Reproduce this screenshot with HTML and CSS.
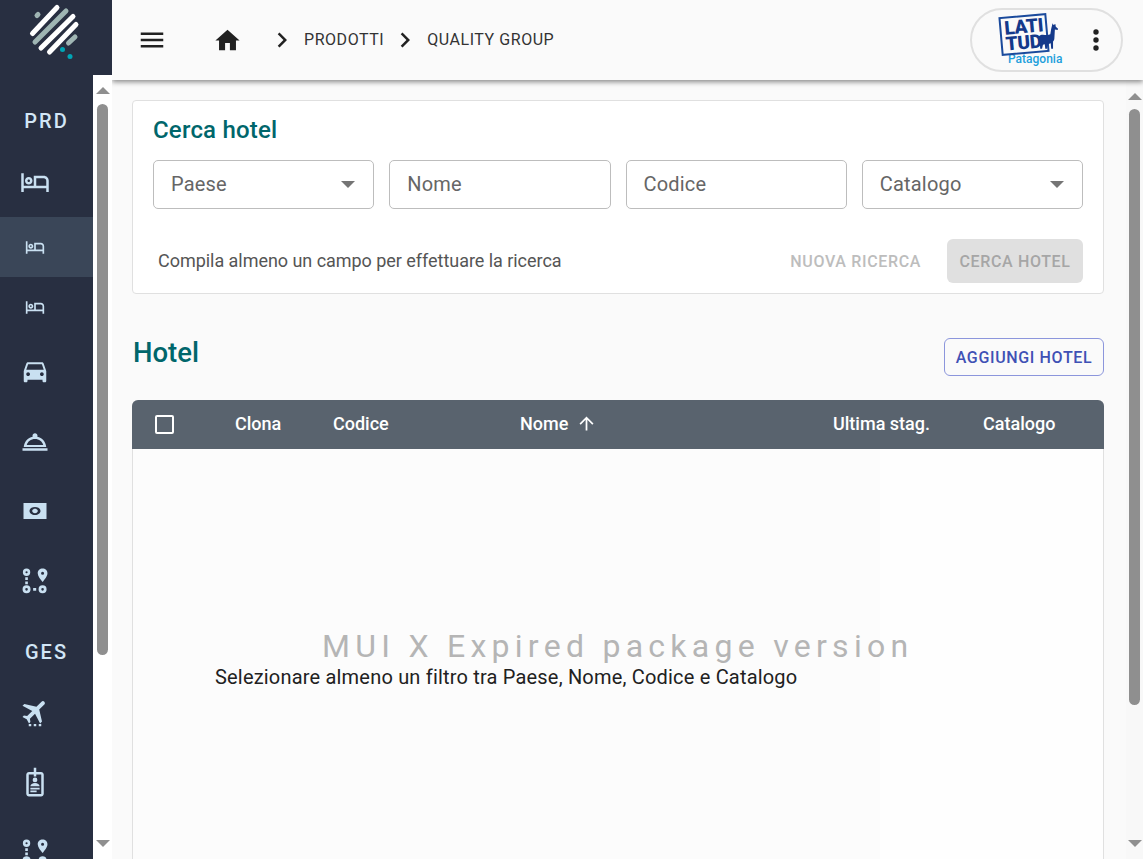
FILE: index.html
```html
<!DOCTYPE html>
<html lang="it">
<head>
    <meta charset="UTF-8">
    <meta name="viewport" content="width=device-width, initial-scale=1.0">
    <title>Quality Group - Prodotti</title>
    <link rel="stylesheet" href="styles.css">
</head>
<body>
    <svg class="defs" aria-hidden="true">
        <symbol id="i-bed" viewBox="0 0 24 24">
            <path d="M7 14c1.66 0 3-1.34 3-3S8.66 8 7 8s-3 1.34-3 3 1.34 3 3 3zm0-4c.55 0 1 .45 1 1s-.45 1-1 1-1-.45-1-1 .45-1 1-1zm12-3h-8v8H3V5H1v15h2v-3h18v3h2v-9c0-2.21-1.79-4-4-4zm2 8h-8V9h6c1.1 0 2 .9 2 2v4z"/>
        </symbol>
        <symbol id="i-route" viewBox="0 0 24 24">
            <path fill-rule="evenodd" d="M4.200 0.500a3.400 3.400 0 1 1 0 6.800 3.400 3.400 0 0 1 0-6.800zm0 2.400a1 1 0 1 0 0 2 1 1 0 0 0 0-2zM19 0.500c2.500 0 4.500 1.900 4.500 4.300 0 2.900-2.800 5.800-4.500 8.200-1.700-2.400-4.500-5.300-4.500-8.200 0-2.400 2-4.300 4.500-4.300zm0 2.900a1.400 1.400 0 1 0 0 2.800 1.400 1.400 0 0 0 0-2.800zM4.200 16a3.700 3.700 0 1 1 0 7.400 3.700 3.700 0 0 1 0-7.400zm0 2.500a1.200 1.200 0 1 0 0 2.400 1.200 1.200 0 0 0 0-2.400zM19 16a3.700 3.700 0 1 1 0 7.400 3.700 3.700 0 0 1 0-7.400zm0 2.500a1.200 1.200 0 1 0 0 2.400 1.200 1.200 0 0 0 0-2.400z"/>
            <path d="M3 8.500h2.400v2.600H3zM3 12.500h2.400v2.600H3zM10.300 18.500h2.800v2.400h-2.800z"/>
        </symbol>
    </svg>

    <div class="app">
        <aside class="sidebar">
            <div class="brand">
                <svg width="112" height="75" viewBox="0 0 112 75" fill="none" stroke-linecap="round" stroke-width="5">
                    <path stroke="#9fb5b3" d="M37 15.500l1-1M35 42L66 11M68.500 43L75 37"/>
                    <path stroke="#fff" d="M32.500 33.500L57 7.500M41 48L73 16.500M49.500 52L76 24.500"/>
                    <circle cx="62.500" cy="49.500" r="2.500" fill="#00a5b5" stroke="none"/>
                    <circle cx="70" cy="56.500" r="2.500" fill="#00a5b5" stroke="none"/>
                </svg>
            </div>
            <div class="side-body">
                <nav class="nav">
                    <div class="nav-label nav-label-first">PRD</div>
                    <a class="nav-item"><svg width="30" height="30"><use href="#i-bed"/></svg></a>
                    <a class="nav-item nav-small nav-active"><svg width="20" height="20"><use href="#i-bed"/></svg></a>
                    <a class="nav-item nav-small"><svg width="20" height="20"><use href="#i-bed"/></svg></a>
                    <a class="nav-item nudge">
                        <svg width="30" height="30" viewBox="0 0 24 24"><path d="M18.920 6.010C18.720 5.420 18.160 5 17.500 5h-11c-.66 0-1.210.42-1.420 1.010L3 12v8c0 .55.45 1 1 1h1c.55 0 1-.45 1-1v-1h12v1c0 .55.45 1 1 1h1c.55 0 1-.45 1-1v-8l-2.080-5.990zM6.500 16c-.83 0-1.500-.67-1.500-1.500S5.670 13 6.500 13s1.500.67 1.500 1.500S7.330 16 6.500 16zm11 0c-.83 0-1.500-.67-1.500-1.500s.67-1.500 1.500-1.500 1.500.67 1.500 1.500-.67 1.500-1.500 1.500zM5 11l1.500-4.500h11L19 11H5z"/></svg>
                    </a>
                    <a class="nav-item">
                        <svg width="30" height="30" viewBox="0 0 24 24"><path fill-rule="evenodd" d="M2 17h20v2H2zm11.840-9.210c.1-.24.16-.51.16-.79 0-1.100-.9-2-2-2s-2 .9-2 2c0 .28.06.55.16.79C6.250 8.600 3.270 11.930 3 16h18c-.27-4.070-3.250-7.400-7.160-8.210zM5.400 14.300c.7-2.700 3.300-4.800 6.600-4.800s5.900 2.100 6.600 4.800z"/></svg>
                    </a>
                    <a class="nav-item nudge">
                        <svg width="30" height="30" viewBox="0 0 30 30"><path fill-rule="evenodd" d="M3.500 7h23v16h-23zM15 11c-3.200 0-5.500 1.800-5.500 4s2.300 4 5.500 4 5.500-1.800 5.500-4-2.300-4-5.500-4zm0 1.800c1.600 0 2.800 1 2.800 2.200s-1.200 2.200-2.800 2.200-2.800-1-2.800-2.200 1.200-2.200 2.800-2.200z"/></svg>
                    </a>
                    <a class="nav-item nudge"><svg width="26" height="26"><use href="#i-route"/></svg></a>
                    <div class="nav-label">GES</div>
                    <a class="nav-item">
                        <svg width="30" height="30" viewBox="0 0 24 24"><path transform="translate(.4 -.5) rotate(45 12 12) translate(-.6 -.6) scale(1.050)" d="M21 16v-2l-8-5V3.500c0-.83-.67-1.500-1.500-1.500S10 2.670 10 3.500V9l-8 5v2l8-2.500V19l-2 1.500V22l3.500-1 3.500 1v-1.500L13 19v-5.500l8 2.500z"/><path d="M7 21.500h2v1.800H7zM11 21.500h2v1.800h-2zM15 21.500h2v1.800h-2z"/></svg>
                    </a>
                    <a class="nav-item">
                        <svg width="30" height="30" viewBox="0 0 24 24"><path fill-rule="evenodd" d="M11 .5h2v3.500h3.800c1.200 0 2.200 1 2.200 2.200v15.100c0 1.200-1 2.200-2.200 2.200H7.200c-1.200 0-2.200-1-2.200-2.200V6.200C5 5 6 4 7.200 4H11zM7.200 6c-.1 0-.2.100-.2.200v15.100c0 .1.100.2.200.2h9.600c.1 0 .2-.1.200-.2V6.200c0-.1-.1-.2-.2-.2H13v1.500h-2V6z"/><circle cx="12" cy="10.300" r="1.900"/><path d="M8.300 15.400c0-1.700 1.700-2.700 3.700-2.700s3.700 1 3.700 2.700zM8.300 16.500h7.400v1.400H8.300zM8.300 18.800h5v1.400h-5z"/></svg>
                    </a>
                    <a class="nav-item"><svg width="26" height="26"><use href="#i-route"/></svg></a>
                </nav>
                <div class="scrollbar side-scrollbar">
                    <span class="arrow-up"></span>
                    <span class="thumb"></span>
                    <span class="arrow-down"></span>
                </div>
            </div>
        </aside>

        <div class="main">
            <header class="topbar">
                <svg class="menu-icon" width="30" height="30" viewBox="0 0 24 24"><path d="M3 18h18v-2H3v2zm0-5h18v-2H3v2zm0-7v2h18V6H3z"/></svg>
                <svg class="home-icon" width="29" height="29" viewBox="0 0 24 24"><path d="M10 20v-6h4v6h5v-8h3L12 3 2 12h3v8z"/></svg>
                <div class="crumbs">
                    <svg width="30" height="30" viewBox="0 0 24 24"><path d="M10 6L8.590 7.410 13.170 12l-4.580 4.590L10 18l6-6z"/></svg>
                    <span>PRODOTTI</span>
                    <svg width="30" height="30" viewBox="0 0 24 24"><path d="M10 6L8.590 7.410 13.170 12l-4.580 4.590L10 18l6-6z"/></svg>
                    <span>QUALITY GROUP</span>
                </div>
                <div class="account">
                    <div class="latitud">
                        <div class="stamp">
                            <span>LATI</span>
                            <span>TUD</span>
                        </div>
                        <svg class="llama" width="22" height="30" viewBox="0 0 24 30"><path d="M17 1l1 2 2-1 .5 3 2.500 2-.5 1.500-3-.5-.5 9c0 2-.5 3-1.500 4v8h-2l-.5-6-3 1-1 5H9l-.5-5-2 .5L5.500 29H3.500l-.5-8c-1.500-1-2-3-1.500-5 1-2 3-2.500 5-2.500 3.500.5 6.500.5 8-.5l1-6z"/></svg>
                        <div class="patagonia">Patagonia</div>
                    </div>
                    <svg class="more-icon" width="24" height="24" viewBox="0 0 24 24"><circle cx="12" cy="4" r="2.700"/><circle cx="12" cy="12" r="2.700"/><circle cx="12" cy="20" r="2.700"/></svg>
                </div>
            </header>

            <div class="page">
                <main class="content">
                    <section class="card">
                        <h2 class="card-title">Cerca hotel</h2>
                        <div class="filters">
                            <div class="field">Paese<span class="caret"></span></div>
                            <div class="field">Nome</div>
                            <div class="field">Codice</div>
                            <div class="field">Catalogo<span class="caret"></span></div>
                        </div>
                        <div class="card-actions">
                            <p class="hint">Compila almeno un campo per effettuare la ricerca</p>
                            <button class="btn-text" disabled>NUOVA RICERCA</button>
                            <button class="btn-disabled" disabled>CERCA HOTEL</button>
                        </div>
                    </section>

                    <div class="section-head">
                        <h1 class="section-title">Hotel</h1>
                        <button class="btn-outline">AGGIUNGI HOTEL</button>
                    </div>

                    <section class="table">
                        <div class="table-head">
                            <div class="cell"><span class="checkbox"></span></div>
                            <div class="cell">Clona</div>
                            <div class="cell">Codice</div>
                            <div class="cell">Nome
                                <svg class="sort-icon" width="21" height="21" viewBox="0 0 24 24"><path d="M4 12l1.410 1.410L11 7.830V20h2V7.830l5.580 5.590L20 12l-8-8-8 8z"/></svg>
                            </div>
                            <div class="cell">Ultima stag.</div>
                            <div class="cell">Catalogo</div>
                        </div>
                        <div class="table-body">
                            <div class="watermark">MUI X Expired package version</div>
                            <p class="empty">Selezionare almeno un filtro tra Paese, Nome, Codice e Catalogo</p>
                        </div>
                    </section>
                </main>
                <div class="scrollbar main-scrollbar">
                    <span class="arrow-up"></span>
                    <span class="thumb"></span>
                    <span class="arrow-down"></span>
                </div>
            </div>
        </div>
    </div>
</body>
</html>
```

FILE: styles.css
```css
* {
    box-sizing: border-box;
}
html, body {
    margin: 0;
    height: 100%;
    overflow: hidden;
}
body {
    font-family: Roboto, "Liberation Sans", sans-serif;
    background: #fafafa;
    color: #212121;
}
.defs {
    display: none;
}
.app {
    display: flex;
    height: 859px;
    overflow: hidden;
}

/* sidebar */
.sidebar {
    width: 112px;
    flex-shrink: 0;
    display: flex;
    flex-direction: column;
    z-index: 2;
}
.brand {
    height: 75px;
    flex-shrink: 0;
    background: #282f41;
}
.brand svg {
    display: block;
}
.side-body {
    flex: 1;
    display: flex;
    min-height: 0;
}
.nav {
    width: 93px;
    background: #282f41;
    color: #c9e0f1;
    overflow: hidden;
}
.nav svg {
    display: block;
    fill: currentColor;
}
.nav-label {
    height: 52px;
    margin-top: 8px;
    padding-top: 2px;
    display: flex;
    align-items: center;
    justify-content: center;
    font-size: 20px;
    font-weight: 500;
    letter-spacing: 2px;
    color: #d2e6f6;
}
.nav-label-first {
    margin-top: 20px;
    padding-top: 0;
}
.nav-item {
    height: 70px;
    display: flex;
    align-items: center;
    justify-content: center;
    padding-right: 23px;
}
.nudge {
    padding-bottom: 2px;
}
.nav-small {
    height: 60px;
}
.nav-active {
    background: #3a4658;
}

/* fake scrollbars */
.scrollbar {
    display: flex;
    flex-direction: column;
    align-items: center;
    flex-shrink: 0;
}
.side-scrollbar {
    width: 19px;
    background: #fff;
    padding: 12px 0;
}
.main-scrollbar {
    width: 17px;
    background: #f8f8f8;
    padding: 13px 0 12px;
}
.thumb {
    width: 11px;
    border-radius: 6px;
    background: #8f8f8f;
    margin-top: 10px;
}
.side-scrollbar .thumb {
    height: 551px;
}
.main-scrollbar .thumb {
    height: 596px;
    margin-top: 9px;
}
.arrow-up, .arrow-down {
    width: 0;
    height: 0;
    border-left: 7px solid transparent;
    border-right: 7px solid transparent;
}
.arrow-up {
    border-bottom: 7px solid #8f8f8f;
}
.arrow-down {
    margin-top: auto;
    border-top: 7px solid #8f8f8f;
}

/* top bar */
.main {
    flex: 1;
    min-width: 0;
    display: flex;
    flex-direction: column;
}
.topbar {
    height: 80px;
    flex-shrink: 0;
    display: flex;
    align-items: center;
    padding: 0 20px 0 25px;
    background: #fafafa;
    box-shadow: 0 2px 5px rgba(0, 0, 0, 0.45);
    z-index: 1;
}
.topbar svg {
    fill: #212121;
    flex-shrink: 0;
}
.home-icon {
    margin-left: 46px;
}
.crumbs {
    display: flex;
    align-items: center;
    margin-left: 25px;
    font-size: 16px;
    letter-spacing: 0.55px;
    color: #333;
}
.crumbs span {
    margin: 0 0 2px 7px;
}
.crumbs span + svg {
    margin-left: 6px;
}
.account {
    margin-left: auto;
    width: 153px;
    height: 64px;
    display: flex;
    align-items: center;
    padding-left: 27px;
    border: 2px solid #e0e0e0;
    border-radius: 32px;
}
.latitud {
    position: relative;
    width: 63px;
    height: 52px;
    padding-top: 1px;
}
.stamp {
    width: 48px;
    height: 39px;
    margin-left: 1px;
    border: 2px solid #1a4a9c;
    transform: rotate(-5deg);
    display: flex;
    flex-direction: column;
    justify-content: center;
    padding-left: 3px;
    font-size: 19px;
    font-weight: 900;
    line-height: 16px;
    letter-spacing: -0.3px;
    white-space: nowrap;
    color: #14398a;
}
.topbar .llama {
    position: absolute;
    left: 38px;
    top: 7px;
    fill: #14398a;
}
.patagonia {
    margin: -1px 0 0 9px;
    font-size: 12px;
    font-weight: 500;
    line-height: 13px;
    color: #1e9fdc;
}
.more-icon {
    margin-left: 22px;
}

/* content */
.page {
    flex: 1;
    display: flex;
    min-height: 0;
}
.content {
    flex: 1;
    min-width: 0;
    padding: 20px 22px 0 20px;
    overflow: hidden;
}
.card {
    height: 194px;
    padding: 15px 20px 0;
    background: #fff;
    border: 1px solid #e0e0e0;
    border-radius: 4px;
}
.card-title {
    margin: 0 0 16px;
    font-size: 24px;
    font-weight: 500;
    line-height: 28px;
    letter-spacing: 0.2px;
    color: #00666b;
}
.filters {
    display: grid;
    grid-template-columns: repeat(4, 1fr);
    gap: 15px;
}
.field {
    height: 49px;
    display: flex;
    align-items: center;
    justify-content: space-between;
    padding: 0 18px 2px 17px;
    border: 1px solid #bdbdbd;
    border-radius: 5px;
    font-size: 20px;
    letter-spacing: 0.2px;
    color: #666;
}
.caret {
    width: 0;
    height: 0;
    margin-top: 2px;
    border-left: 7px solid transparent;
    border-right: 7px solid transparent;
    border-top: 7px solid #757575;
}
.card-actions {
    display: flex;
    align-items: center;
    margin-top: 30px;
    height: 44px;
}
.hint {
    margin: 0 auto 2px 5px;
    font-size: 18px;
    letter-spacing: -0.04px;
    color: #555;
}
button {
    font-family: inherit;
    font-size: 16px;
    font-weight: 500;
    letter-spacing: 0.65px;
    border-radius: 6px;
}
.btn-text {
    padding: 0;
    margin-right: 26px;
    border: 0;
    background: none;
    color: #bdbdbd;
}
.btn-disabled {
    width: 136px;
    height: 44px;
    padding: 0;
    border: 0;
    background: #e0e0e0;
    color: #a6a6a6;
}
.section-head {
    display: flex;
    justify-content: space-between;
    align-items: flex-start;
    margin: 44px 0 24px;
    height: 38px;
}
.section-title {
    margin: 0 0 0 1px;
    font-size: 27.500px;
    font-weight: 500;
    line-height: 30px;
    color: #00666b;
}
.btn-outline {
    width: 160px;
    height: 38px;
    padding: 0;
    background: transparent;
    border: 1px solid #8c96dc;
    color: #3f51b5;
}

/* table */
.table {
    border: 1px solid #e0e0e0;
    border-top: 0;
    border-radius: 6px 6px 0 0;
    height: 500px;
}
.table-head {
    height: 49px;
    margin: 0 -1px;
    padding-bottom: 2px;
    display: grid;
    grid-template-columns: 103px 98px 187px 313px 150px 1fr;
    align-items: center;
    background: #59636e;
    border-radius: 6px 6px 0 0;
    color: #fff;
    font-size: 18px;
    font-weight: 500;
}
.cell {
    display: flex;
    align-items: center;
}
.checkbox {
    width: 19px;
    height: 19px;
    margin: 2px 0 0 23px;
    border: 2px solid #fff;
    border-radius: 2px;
}
.sort-icon {
    margin-left: 8px;
    fill: #fff;
}
.table-body {
    position: relative;
    height: 451px;
    padding: 216px 0 0 82px;
    background: linear-gradient(90deg, #fcfcfc 747px, #fefefe 747px);
}
.watermark {
    position: absolute;
    left: 189px;
    top: 178px;
    font-size: 32px;
    letter-spacing: 5.270px;
    white-space: nowrap;
    color: #b5b5b5;
}
.empty {
    margin: 0;
    font-size: 20px;
    line-height: 24px;
    letter-spacing: 0.19px;
    color: #212121;
}
```
